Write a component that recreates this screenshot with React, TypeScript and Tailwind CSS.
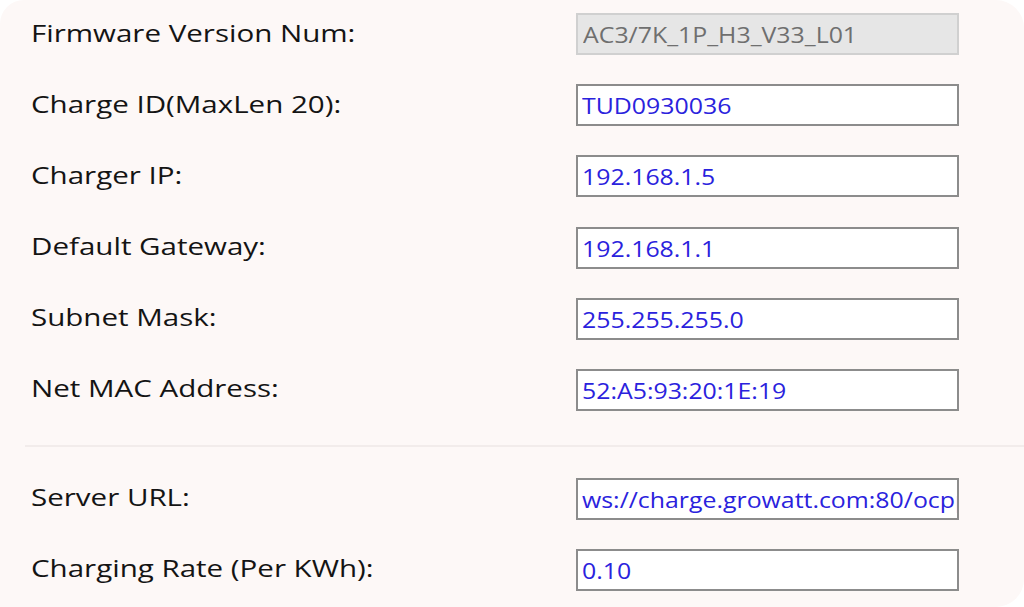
import React from 'react';

type Field = { label: string; value: string; disabled?: boolean };

const topFields: Field[] = [
  { label: 'Firmware Version Num:', value: 'AC3/7K_1P_H3_V33_L01', disabled: true },
  { label: 'Charge ID(MaxLen 20):', value: 'TUD0930036' },
  { label: 'Charger IP:', value: '192.168.1.5' },
  { label: 'Default Gateway:', value: '192.168.1.1' },
  { label: 'Subnet Mask:', value: '255.255.255.0' },
  { label: 'Net MAC Address:', value: '52:A5:93:20:1E:19' },
];

const bottomFields: Field[] = [
  { label: 'Server URL:', value: 'ws://charge.growatt.com:80/ocpp' },
  { label: 'Charging Rate (Per KWh):', value: '0.10' },
];

const Row = ({ field }: { field: Field }) => (
  <div className="flex items-center h-[42px]">
    <div className="w-[576px] pl-[31px]">
      <span className="inline-block origin-left scale-x-[1.23] whitespace-nowrap text-[24px] text-[#141414] leading-none">
        {field.label}
      </span>
    </div>
    <div
      className={
        field.disabled
          ? 'w-[383px] h-[42px] pl-[5px] flex items-center overflow-hidden border-2 border-[#d0d0d0] bg-[#e6e6e6] text-[#6f6f6f]'
          : 'w-[383px] h-[42px] pl-[4px] flex items-center overflow-hidden border-2 border-[#8c8c8c] bg-white text-[#2a22dd]'
      }
    >
      <span className="inline-block origin-left scale-x-[1.13] whitespace-nowrap text-[22px] leading-none">
        {field.value}
      </span>
    </div>
  </div>
);

const App = () => {
  return (
    <div className="w-[1024px] h-[607px] bg-white" style={{ fontFamily: '"Open Sans", "Noto Sans", sans-serif' }}>
      <div className="h-full bg-[#fdf8f7] rounded-tl-[24px] rounded-tr-[28px] rounded-br-[28px] pt-[13px]">
        <div className="flex flex-col gap-[29.2px]">
          {topFields.map((f) => (
            <Row key={f.label} field={f} />
          ))}
        </div>
        <div className="ml-[25px] mt-[34px] h-[2px] bg-[#f2eceb]" />
        <div className="mt-[31px] flex flex-col gap-[29px]">
          {bottomFields.map((f) => (
            <Row key={f.label} field={f} />
          ))}
        </div>
      </div>
    </div>
  );
};

export default App;
